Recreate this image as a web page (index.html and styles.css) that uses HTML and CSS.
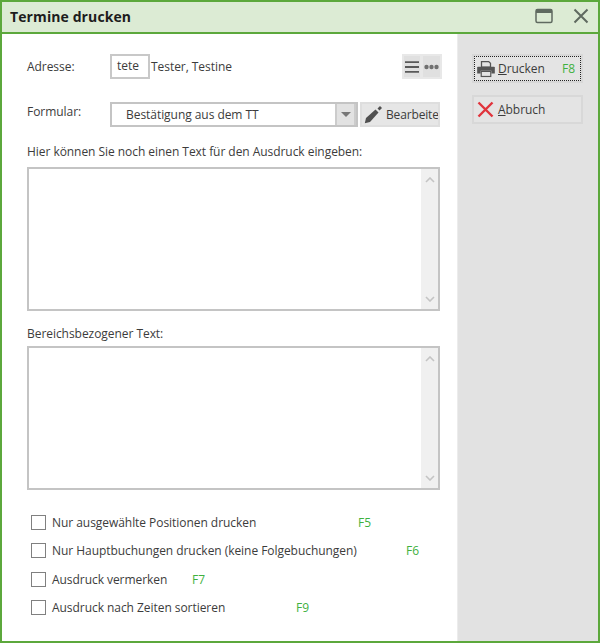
FILE: index.html
```html
<!DOCTYPE html>
<html lang="de">
<head>
<meta charset="utf-8">
<title>Termine drucken</title>
<link rel="stylesheet" href="styles.css">
</head>
<body>
<div class="window">
  <header class="titlebar">
    <h1 class="title">Termine drucken</h1>
    <div class="winbtns">
      <svg class="winicon" width="18" height="16" viewBox="0 0 18 16"><rect x="1" y="1.5" width="16" height="13" rx="1.5" fill="none" stroke="#5f6a60" stroke-width="1.5"/><rect x="1" y="1.5" width="16" height="3.5" fill="#5f6a60"/></svg>
      <svg class="winicon" width="16" height="16" viewBox="0 0 16 16"><path d="M1.5 1.5L14.5 14.5M14.5 1.5L1.5 14.5" stroke="#5f6a60" stroke-width="2" fill="none"/></svg>
    </div>
  </header>
  <div class="content">
    <main class="main">
      <div class="row row-address">
        <span class="label">Adresse:</span>
        <span class="code">tete</span>
        <span class="name">Tester, Testine</span>
        <div class="tools">
          <span class="tool"><svg width="14" height="12" viewBox="0 0 14 12"><path d="M0 1.2H14M0 6H14M0 10.8H14" stroke="#5a5a5a" stroke-width="1.8"/></svg></span>
          <span class="tool"><svg width="15" height="6" viewBox="0 0 15 6"><circle cx="2.5" cy="3" r="2.2" fill="#707070"/><circle cx="7.5" cy="3" r="2.2" fill="#707070"/><circle cx="12.5" cy="3" r="2.2" fill="#707070"/></svg></span>
        </div>
      </div>
      <div class="row row-form">
        <span class="label">Formular:</span>
        <div class="select">
          <span class="select-text">Bestätigung aus dem TT</span>
          <span class="select-arrow"><svg width="10" height="5" viewBox="0 0 10 5"><path d="M0 0H10L5 5Z" fill="#777"/></svg></span>
        </div>
        <button class="edit">
          <svg width="19" height="19" viewBox="0 0 19 19"><path d="M0.8 18.2L2 13L11.5 4.5L14.5 7.5L6 17Z" fill="#505050"/><path d="M13.5 3.5L16 1L18 3L15.5 5.5Z" fill="#505050"/></svg>
          <span>Bearbeite</span>
        </button>
      </div>
      <p class="fieldlabel first">Hier können Sie noch einen Text für den Ausdruck eingeben:</p>
      <div class="memo">
        <div class="memo-body"></div>
        <div class="scrollbar">
          <svg width="10" height="6" viewBox="0 0 10 6"><path d="M1 5L5 1L9 5" fill="none" stroke="#c4c4c4" stroke-width="1.6"/></svg>
          <svg width="10" height="6" viewBox="0 0 10 6"><path d="M1 1L5 5L9 1" fill="none" stroke="#c4c4c4" stroke-width="1.6"/></svg>
        </div>
      </div>
      <p class="fieldlabel second">Bereichsbezogener Text:</p>
      <div class="memo">
        <div class="memo-body"></div>
        <div class="scrollbar">
          <svg width="10" height="6" viewBox="0 0 10 6"><path d="M1 5L5 1L9 5" fill="none" stroke="#c4c4c4" stroke-width="1.6"/></svg>
          <svg width="10" height="6" viewBox="0 0 10 6"><path d="M1 1L5 5L9 1" fill="none" stroke="#c4c4c4" stroke-width="1.6"/></svg>
        </div>
      </div>
      <ul class="checks">
        <li class="check"><span class="box"></span><span class="check-text w1">Nur ausgewählte Positionen drucken</span><span class="key">F5</span></li>
        <li class="check"><span class="box"></span><span class="check-text w2">Nur Hauptbuchungen drucken (keine Folgebuchungen)</span><span class="key">F6</span></li>
        <li class="check"><span class="box"></span><span class="check-text w3">Ausdruck vermerken</span><span class="key">F7</span></li>
        <li class="check"><span class="box"></span><span class="check-text w4">Ausdruck nach Zeiten sortieren</span><span class="key">F9</span></li>
      </ul>
    </main>
    <aside class="side">
      <button class="action primary">
        <span class="action-inner">
          <svg width="18" height="18" viewBox="0 0 20 18"><path d="M5 0.7H13L15 2.7V7H5Z" fill="none" stroke="#555" stroke-width="1.4"/><path d="M1.5 6.5H18.5A1.2 1.2 0 0 1 19.8 8V14H16V11H4V14H0.2V8A1.2 1.2 0 0 1 1.5 6.5Z" fill="#555"/><rect x="4.7" y="11.7" width="10.6" height="5.6" fill="none" stroke="#555" stroke-width="1.3"/></svg>
          <span class="action-text"><u>D</u>rucken</span>
          <span class="key f8">F8</span>
        </span>
      </button>
      <button class="action">
        <span class="action-inner">
          <svg width="17" height="17" viewBox="0 0 17 17"><path d="M1.5 1.5L15.5 15.5M15.5 1.5L1.5 15.5" stroke="#e0343c" stroke-width="2.4" fill="none"/></svg>
          <span class="action-text"><u>A</u>bbruch</span>
        </span>
      </button>
    </aside>
  </div>
</div>
</body>
</html>
```
FILE: styles.css
```css
* { box-sizing: border-box; }
html, body { margin: 0; padding: 0; }
body {
  width: 600px;
  height: 643px;
  overflow: hidden;
  background: #fff;
  font-family: "Open Sans", "Noto Sans", sans-serif;
  font-size: 12px;
  letter-spacing: -0.05px;
  color: #3c3c3c;
}
.window {
  width: 600px;
  height: 643px;
  display: flex;
  flex-direction: column;
  border: 2px solid #5ca83c;
}
.titlebar {
  height: 32px;
  flex: none;
  display: flex;
  align-items: center;
  justify-content: space-between;
  background: #dcebd4;
  border-bottom: 2px solid #5ca83c;
  padding: 0 9px 2px 8px;
}
.title {
  margin: 0;
  font-size: 14px;
  font-weight: 700;
  color: #1d1d1d;
  letter-spacing: 0.1px;
}
.winbtns { display: flex; align-items: center; gap: 20px; }
.winicon { display: block; }
.content { flex: 1; display: flex; min-height: 0; }
.main { width: 455px; flex: none; padding: 0 17px 0 25px; display: flex; flex-direction: column; }
.side {
  flex: 1;
  background: #e2e2e2;
  border-left: 1px solid #ececec;
  display: flex;
  flex-direction: column;
  gap: 12px;
  padding: 20px 14px 0 14px;
}
.row { display: flex; align-items: center; }
.row-address { height: 25px; margin-top: 20px; }
.row-form { height: 25px; margin-top: 23px; }
.row-form .label { padding-bottom: 6px; }
.label { width: 83px; flex: none; }
.code {
  width: 40px;
  height: 25px;
  border: 2px solid #c8c8c8;
  background: #fff;
  padding: 1px 0 0 5px;
  flex: none;
}
.name { margin-left: 1px; }
.tools { margin-left: auto; display: flex; background: #e8e8e8; padding: 2px; gap: 3px; height: 25px; width: 40px; margin-right: -1.5px; }
.tool { flex: 1; display: flex; align-items: center; justify-content: center; background: #e0e0e0; }
.tool svg { flex: none; }
.select {
  width: 248px;
  height: 25px;
  border: 2px solid #c4c4c4;
  display: flex;
  align-items: stretch;
  flex: none;
}
.select-text { flex: 1; padding: 2px 0 0 14px; }
.select-arrow {
  width: 21px;
  background: #e2e2e2;
  border: solid #cccccc;
  border-width: 0 2px 0 2px;
  display: flex;
  align-items: center;
  justify-content: center;
}
.edit {
  margin-left: 2px;
  width: 80px;
  height: 25px;
  border: 2px solid #dedede;
  background: #e6e6e6;
  font: inherit;
  color: inherit;
  letter-spacing: -0.15px;
  display: flex;
  align-items: center;
  gap: 3px;
  padding: 0 0 0 2px;
  white-space: nowrap;
  overflow: hidden;
}
.edit svg { flex: none; }
.fieldlabel { margin: 0; height: 17px; line-height: 17px; }
.fieldlabel.first { margin-top: 16px; }
.fieldlabel.second { margin-top: 14px; }
.memo {
  margin-top: 4px;
  height: 144px;
  border: 2px solid #c4c4c4;
  display: flex;
  width: 413px;
  flex: none;
}
.fieldlabel.first + .memo { margin-top: 7px; }
.memo-body { flex: 1; background: #fff; }
.scrollbar {
  width: 17px;
  background: #f0f0f0;
  display: flex;
  flex-direction: column;
  justify-content: space-between;
  align-items: center;
  padding: 8px 0 7px;
}
.checks { list-style: none; margin: 25px 0 0 4px; padding: 0; display: flex; flex-direction: column; gap: 13.3px; }
.check { display: flex; align-items: center; height: 15px; }
.box { width: 15px; height: 15px; border: 1.5px solid #808080; background: #fff; flex: none; margin-right: 6px; }
.check-text { flex: none; }
.w1 { width: 306px; }
.w2 { width: 354px; }
.w3 { width: 140px; }
.w4 { width: 244px; }
.key { color: #3fb13f; }
.action {
  width: 111px;
  height: 29px;
  border: 2px solid #d8d8d8;
  background: #e4e4e4;
  font: inherit;
  color: inherit;
  letter-spacing: inherit;
  padding: 0;
  display: block;
}
.action-inner {
  display: flex;
  align-items: center;
  height: 100%;
  padding: 0 3px 0 3px;
  gap: 4px;
}
.primary .action-inner { border: 1px dotted #222; padding-left: 2px; gap: 3px; }
.action-text { flex: 1; text-align: left; }
.f8 { margin-right: 2px; }
```
